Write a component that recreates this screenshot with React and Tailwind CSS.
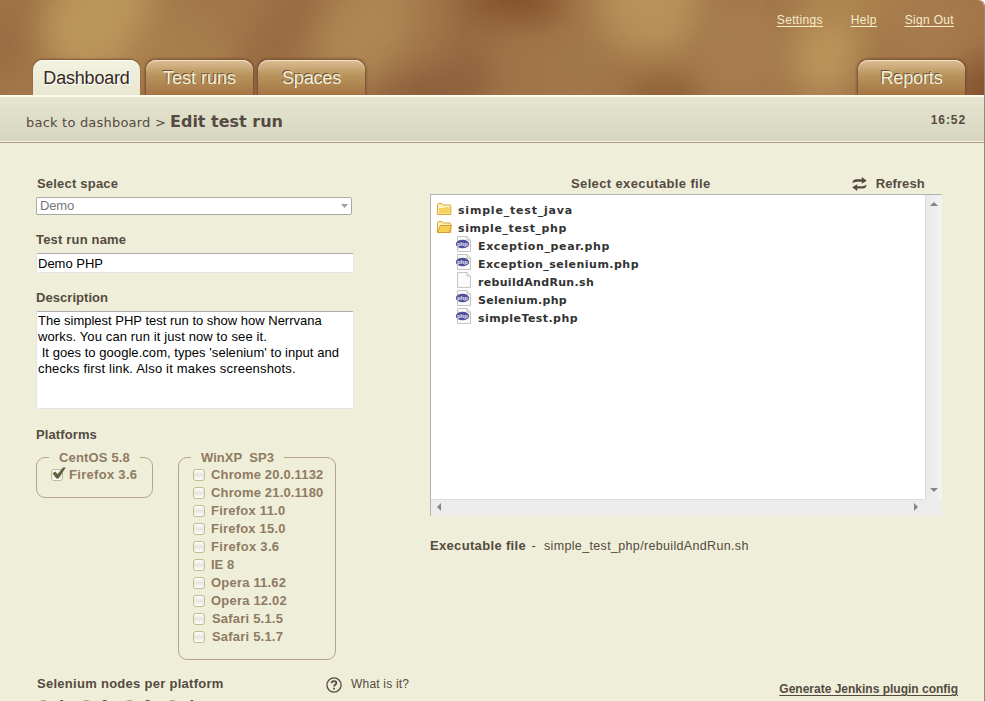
const sans = "font-['Liberation_Sans',Arial,sans-serif]";
const wide = "font-['DejaVu_Sans',Verdana,sans-serif]";

function HeaderTexture() {
  const blobs = [
    [8, 45, 30, 60, 30, "#9a6c43", 0.8],
    [20, 98, 24, 18, 0, "#ab8051", 0.6],
    [98, 20, 52, 62, 42, "#bb965c", 1],
    [185, 60, 60, 44, 30, "#aa8150", 0.7],
    [285, 30, 24, 80, 32, "#966841", 0.85],
    [365, 32, 40, 60, 35, "#ae8653", 1],
    [430, 96, 75, 26, -20, "#8a5b3a", 0.9],
    [512, 0, 54, 24, 0, "#835029", 1],
    [472, 45, 20, 50, 15, "#936540", 0.7],
    [520, 65, 30, 30, 0, "#a0754a", 0.7],
    [585, 60, 30, 40, 30, "#a3794b", 0.5],
    [650, 5, 54, 50, 40, "#b8915a", 1],
    [667, 98, 40, 18, 0, "#88592f", 0.9],
    [740, 50, 40, 50, 30, "#a97e50", 0.9],
    [828, 48, 34, 50, 15, "#bb955b", 1],
    [860, 5, 60, 24, 0, "#ae8450", 0.9],
    [935, 30, 44, 44, 0, "#a87c4e", 0.8],
    [988, 92, 26, 34, 0, "#7f4e2b", 1],
  ];
  return (
    <svg className="absolute inset-0 h-[95px] w-full" viewBox="0 0 985 95" preserveAspectRatio="none" aria-hidden="true">
      <defs>
        <filter id="soft" filterUnits="userSpaceOnUse" x="-400" y="-400" width="1900" height="1000">
          <feGaussianBlur stdDeviation="17" />
        </filter>
      </defs>
      {blobs.map(([x, y, rx, ry, r, fill, o]) => (
        <ellipse key={x} cx={x} cy={y} rx={rx} ry={ry} fill={fill} opacity={o} transform={`rotate(${r} ${x} ${y})`} filter="url(#soft)" />
      ))}
    </svg>
  );
}

function Tab({ children, active, className = "" }) {
  const base = "h-[35px] w-[107px] rounded-t-[10px] text-center text-[18px] leading-[36px] shrink-0 ";
  const look = active
    ? "bg-linear-to-b from-[#f2f2e0] to-[#e7e7d1] text-[#35281e] shadow-[0_-1px_2px_#7a5334,inset_0_1px_0_#fffff5] [text-shadow:1px_1px_0_#fff] "
    : "bg-linear-to-b from-[#dcbf95] via-[#b7935b] via-45% to-[#a67544] text-[#f3f0dc] shadow-[0_0_3px_1px_#704a2d,inset_0_1px_0_#f3e3cb] [text-shadow:-1px_-1px_0_#6e4f30] ";
  return <a className={base + look + className}>{children}</a>;
}

function Label({ children, className = "" }) {
  return <div className={"h-4 text-[13px] leading-[17px] font-bold whitespace-pre text-[#554a42] " + className}>{children}</div>;
}

function Check({ on }) {
  return (
    <span className="relative mt-[3px] block size-3 shrink-0 rounded-[3px] border border-[#c0bc93] bg-linear-to-b from-white via-[#e6e5da] to-white">
      {on && (
        <svg className="absolute -top-[3px] left-0 h-[13px] w-[14px]" viewBox="0 0 14 13" aria-hidden="true">
          <path d="M.6 6.200L3.400 4.600 5.600 7.200 10.800 .6H13.800L6.600 11.400H4.400Z" fill="#62603c" />
        </svg>
      )}
    </span>
  );
}

function Platform({ title, titleClass, rows, className }) {
  return (
    <fieldset className={"rounded-[9px] border border-[#b5a38c] pl-3 text-[13px] font-bold text-[#8f7a63] " + className}>
      <legend className={"h-[18px] px-[10px] leading-[19px] whitespace-pre " + titleClass}>{title}</legend>
      {rows.map(([name, cls, on]) => (
        <div key={name} className="flex h-[18px] gap-[6px] pl-[2px] leading-[17px]">
          <Check on={on} />
          <span className={"whitespace-pre " + cls}>{name}</span>
        </div>
      ))}
    </fieldset>
  );
}

function Folder({ open }) {
  return (
    <svg className="h-3 w-[15px] shrink-0" viewBox="0 0 15 12" aria-hidden="true">
      <path d="M.5 11.5V1.5Q.5.5 1.5.5H5l1.2 1.5H13q.8 0 .8 1v8.5z" fill="#fdf0b4" stroke="#dba53c" />
      {open ? (
        <path d="M.7 11.5L3.4 4.5H14.5L12.2 11.5z" fill="#f8cf55" stroke="#d79a35" />
      ) : (
        <>
          <path d="M2 5h5l1-1h4.8v6.6H2z" fill="#f6d25c" />
          <path d="M2.3 4.5h4.4l1-1h4.5" fill="none" stroke="#fffbe2" />
        </>
      )}
    </svg>
  );
}

function FileIcon({ php }) {
  return (
    <svg className="h-4 w-4 shrink-0 overflow-visible" viewBox="0 0 16 16" aria-hidden="true">
      <path d="M1.5.5h9.500l3.500 3.500v11.500h-13z" fill="#fafafa" stroke="#c4c4c4" />
      <path d="M11 .5v3.500h3.500" fill="#eee" stroke="#c4c4c4" />
      {php && (
        <>
          <ellipse cx="6.500" cy="8" rx="6.700" ry="4.300" fill="#50509a" />
          <text x="6.400" y="9.700" textAnchor="middle" fontFamily="Liberation Sans" fontWeight="700" fontSize="6" fill="#e8e8f8">php</text>
        </>
      )}
    </svg>
  );
}

const files = [
  ["simple_test_java", "tracking-[0.8px]", "closed"],
  ["simple_test_php", "tracking-[0.6px]", "open"],
  ["Exception_pear.php", "tracking-[0.62px]", "php"],
  ["Exception_selenium.php", "tracking-[0.49px]", "php"],
  ["rebuildAndRun.sh", "tracking-[0.32px]", "plain"],
  ["Selenium.php", "tracking-[0.31px]", "php"],
  ["simpleTest.php", "tracking-[0.43px]", "php"],
];

const winRows = [
  ["Chrome 20.0.1132", "tracking-[0.16px]"],
  ["Chrome 21.0.1180", "tracking-[0.16px]"],
  ["Firefox 11.0", "tracking-[0.24px]"],
  ["Firefox 15.0", "tracking-[0.2px]"],
  ["Firefox 3.6", "tracking-[0.3px]"],
  ["IE 8", ""],
  ["Opera 11.62", "tracking-[0.2px]"],
  ["Opera 12.02", "tracking-[0.2px]"],
  ["Safari 5.1.5", "pl-px tracking-[0.2px]"],
  ["Safari 5.1.7", "pl-px tracking-[0.2px]"],
];

function Arrow({ d, className = "" }) {
  return (
    <svg className={"size-2 " + className} viewBox="0 0 8 8" aria-hidden="true">
      <path d={d} fill="#858585" />
    </svg>
  );
}

export default function App() {
  return (
    <div className={"h-[701px] w-[985px] overflow-hidden rounded-tr-[6px] border-r border-[#9c8470] bg-[#efefd9] " + sans}>
      <header className="relative h-[95px] overflow-hidden rounded-tr-[6px] bg-[#a2764a]">
        <HeaderTexture />
        <div className="relative flex h-full flex-col justify-between">
          <nav className="flex h-10 items-center justify-end gap-7 pr-[30px] text-[12px] tracking-[0.32px] text-[#f3eccb] underline underline-offset-2">
            <a>Settings</a>
            <a>Help</a>
            <a>Sign Out</a>
          </nav>
          <div className="flex gap-[5px] pr-[19px] pl-[33px]">
            <Tab active className="tracking-[-0.2px]">Dashboard</Tab>
            <Tab className="ml-px">Test runs</Tab>
            <Tab className="tracking-[-0.15px]">Spaces</Tab>
            <Tab className="ml-auto tracking-[-0.15px]">Reports</Tab>
          </div>
        </div>
      </header>

      <div className="flex h-12 items-center justify-between border-t-2 border-b border-t-[#fbfbee] border-b-[#b39d88] bg-linear-to-b from-[#e6e6d0] to-[#d6d6c0] pr-[18px] pl-[26px] text-[#554a42] shadow-[inset_0_-1px_0_#f4f4e4]">
        <div className={"flex items-baseline gap-1 pt-1 whitespace-pre " + wide}>
          <span className="text-[13px] tracking-[0.21px]">back to dashboard &gt;</span>
          <b className="text-[16px]">Edit test run</b>
        </div>
        <b className="text-[12px] tracking-[0.9px]">16:52</b>
      </div>

      <main className="flex pt-8 pl-9">
        <section className="w-[394px] shrink-0">
          <Label className="pl-px tracking-[0.2px]">Select space</Label>
          <div className="mt-[6px] flex h-[18px] w-[316px] items-center justify-between rounded-[2px] border border-[#aaa9a5] bg-white pr-[3px] pl-[3px] text-[13px] leading-4 tracking-[-0.17px] text-[#777]">
            Demo
            <svg className="h-1 w-[7px]" viewBox="0 0 7 4" aria-hidden="true"><path d="M0 0h7L3.500 4z" fill="#a0a0a0" /></svg>
          </div>
          <Label className="mt-4 tracking-[0.18px]">Test run name</Label>
          <div className="mt-[6px] h-5 w-[318px] rounded-[2px] border border-[#e3e3e8] border-t-[#abadb3] bg-white pl-px text-[13px] leading-[19px] text-black">Demo PHP</div>
          <Label className="mt-4 tracking-[0.05px]">Description</Label>
          <div className="mt-[6px] h-[98px] w-[318px] rounded-[2px] border border-[#e3e3e8] border-t-[#abadb3] bg-white pt-px pl-px text-[13px] leading-4 whitespace-pre text-black">
            <div>The simplest PHP test run to show how Nerrvana</div>
            <div className="tracking-[0.12px]">works. You can run it just now to see it.</div>
            <div className="tracking-[0.05px]">{" It goes to google.com, types 'selenium' to input and"}</div>
            <div className="tracking-[0.19px]">checks first link. Also it makes screenshots.</div>
          </div>
          <Label className="mt-[17px] tracking-[0.11px]">Platforms</Label>
          <div className="mt-[6px] flex items-start gap-[25px]">
            <Platform className="h-[50px] w-[117px]" title="CentOS 5.8" titleClass="tracking-[0.16px]" rows={[["Firefox 3.6", "tracking-[0.3px]", true]]} />
            <Platform className="h-[212px] w-[158px]" title="WinXP  SP3" titleClass="tracking-[0.04px]" rows={winRows} />
          </div>
          <div className="mt-4 flex h-4">
            <div className="w-[290px] pl-px text-[13px] leading-4 font-bold tracking-[0.28px] whitespace-pre text-[#554a42]">Selenium nodes per platform</div>
            <svg className="mt-px size-4 shrink-0" viewBox="0 0 16 16" aria-hidden="true">
              <circle cx="8" cy="8" r="7.100" fill="none" stroke="#554a42" strokeWidth="1.300" />
              <path d="M5.600 6.300Q5.700 4.200 8 4.200q2.400 0 2.400 1.900 0 1.100-1.400 1.800Q8 8.500 8 9.600M8 10.800v1.700" fill="none" stroke="#554a42" strokeWidth="1.800" />
            </svg>
            <span className="ml-[9px] text-[12px] leading-4 tracking-[0.2px] whitespace-pre text-[#554a42]">What is it?</span>
          </div>
          <div className="mt-[5px] flex pl-px text-[13px] leading-4 font-bold text-[#554a42]">
            {[1, 2, 3, 4].map((n) => (
              <span key={n} className="flex w-[43px] gap-[8px]">
                <i className="mt-[3px] block size-[13px] rounded-full border-2 border-[#aaa677] bg-white" />
                {n}
              </span>
            ))}
          </div>
        </section>

        <section className="w-[512px] shrink-0">
          <div className="flex h-4">
            <Label className="pl-[141px] tracking-[0.37px]">Select executable file</Label>
            <svg className="mt-[2px] ml-[141px] h-[14px] w-[15px] shrink-0" viewBox="0 0 15 14" aria-hidden="true">
              <path d="M.4 6.300Q.6 2.300 4.500 2.300H9.800V0L14.800 3.800 9.800 6.800V4.800H4.500Q2.400 4.800.4 6.300Z" fill="#554a42" />
              <path d="M14.600 7.500Q14.400 11.600 10.500 11.600H5.200V13.900L.2 10.200 5.200 7.200V9.200H10.500Q12.600 9.200 14.600 7.500Z" fill="#554a42" />
            </svg>
            <Label className="ml-[9px] tracking-[0.1px]">Refresh</Label>
          </div>
          <div className="mt-[3px] grid h-[322px] w-[512px] grid-cols-[1fr_17px] grid-rows-[1fr_17px] border-t border-l border-[#b3b3b3] bg-[#ececec]">
            <div className={"bg-white pt-[6px] pl-[6px] text-[11px] font-bold text-[#333] " + wide}>
              {files.map(([name, cls, kind]) => {
                const folder = kind === "closed" || kind === "open";
                return (
                  <div key={name} className={folder ? "flex h-[18px] gap-[6px]" : "flex h-[18px] gap-[6px] pl-[19px]"}>
                    {folder ? <span className="mt-[2px]"><Folder open={kind === "open"} /></span> : <span className="-mt-px"><FileIcon php={kind === "php"} /></span>}
                    <span className={"leading-[20px] whitespace-pre " + cls}>{name}</span>
                  </div>
                );
              })}
            </div>
            <div className="flex flex-col items-center justify-between border-l border-[#dedede] bg-linear-to-r from-[#e9e9e9] to-[#f3f3f3] py-[5px]">
              <Arrow d="M0 6h8L4 2z" />
              <Arrow d="M0 2h8L4 6z" />
            </div>
            <div className="flex items-center justify-between border-t border-[#dedede] bg-[#ececec] px-[5px] pb-[3px]">
              <Arrow d="M6 0v8L2 4z" className="-ml-px" />
              <Arrow d="M2 0v8L6 4z" />
            </div>
          </div>
          <div className="mt-[21px] flex h-4 items-baseline whitespace-pre text-[#554a42]">
            <b className="text-[13px] leading-[18px] tracking-[0.33px]">Executable file</b>
            <span className="w-[18px] pl-0.5 text-[13px] leading-[18px]"> -</span>
            <span className="text-[12.500px] leading-[18px] tracking-[0.34px]">simple_test_php/rebuildAndRun.sh</span>
          </div>
          <div className="mt-[127px] -mr-4 text-right text-[12px] leading-[18px] font-bold text-[#554a42] underline underline-offset-2">Generate Jenkins plugin config</div>
        </section>
      </main>
    </div>
  );
}
